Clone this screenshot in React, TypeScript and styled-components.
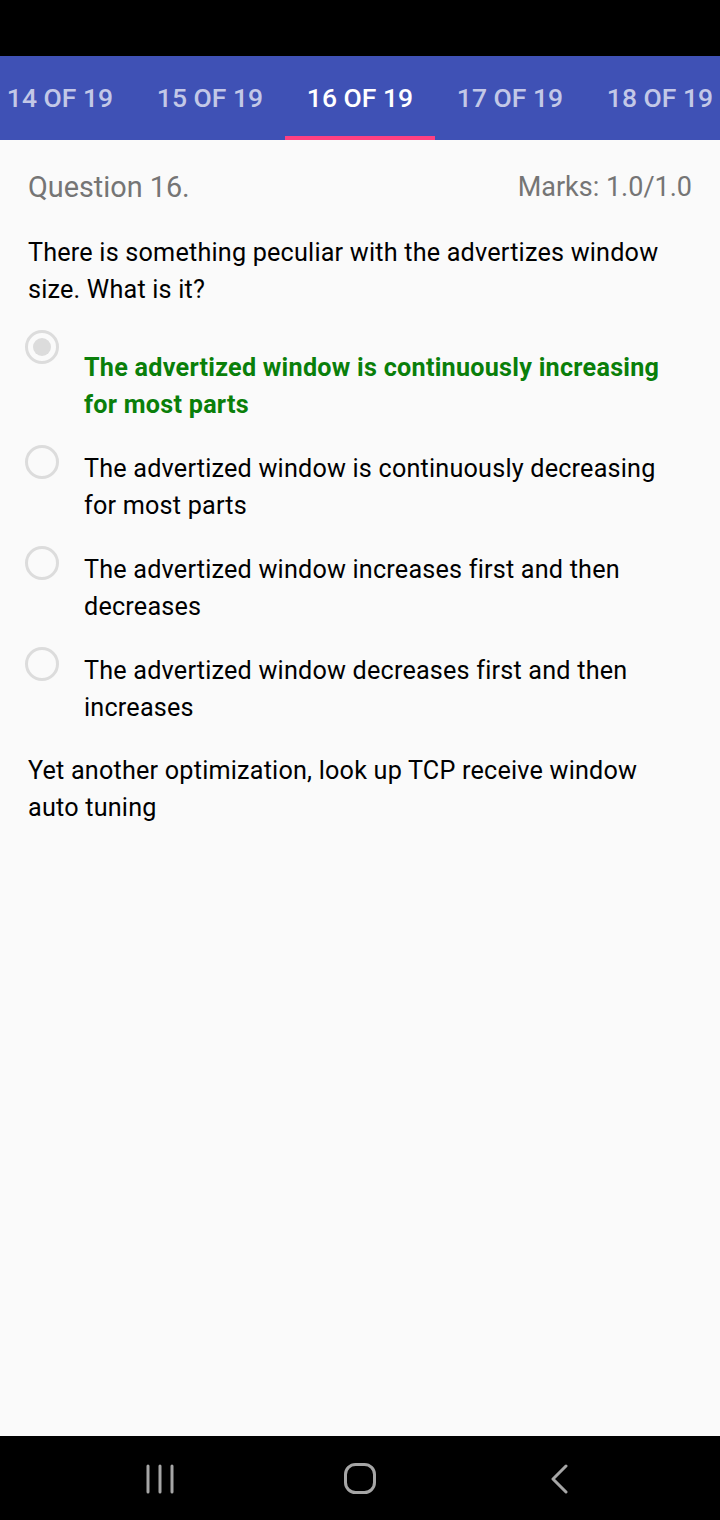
import React from "react";
import styled, { createGlobalStyle } from "styled-components";

const Global = createGlobalStyle`
  html, body { margin: 0; padding: 0; background: #000; }
  body { font-family: Roboto, "Noto Sans", Arial, sans-serif; }
  * { box-sizing: border-box; }
`;

const Screen = styled.div`
  width: 720px;
  height: 1520px;
  display: flex;
  flex-direction: column;
  background: #fafafa;
  overflow: hidden;
`;

const StatusBar = styled.div`
  height: 56px;
  background: #000;
  flex-shrink: 0;
`;

const TabBar = styled.div`
  height: 84px;
  background: #3f51b5;
  display: flex;
  overflow: hidden;
  flex-shrink: 0;
`;

const TabStrip = styled.div`
  display: flex;
  margin-left: -15px;
`;

const Tab = styled.div<{ $active?: boolean }>`
  width: 150px;
  height: 84px;
  flex-shrink: 0;
  display: flex;
  align-items: center;
  justify-content: center;
  padding-bottom: 2px;
  font-size: 26.5px;
  font-weight: 500;
  color: ${(p) => (p.$active ? "#ffffff" : "rgba(255,255,255,0.7)")};
  box-shadow: ${(p) => (p.$active ? "inset 0 -4px 0 #ff4081" : "none")};
  white-space: nowrap;
`;

const Content = styled.div`
  flex: 1;
  padding: 29px 28px 0 28px;
  display: flex;
  flex-direction: column;
`;

const HeaderRow = styled.div`
  display: flex;
  justify-content: space-between;
  align-items: center;
  line-height: 37px;
  color: #757575;
`;

const Title = styled.span`
  font-size: 28.8px;
`;

const Marks = styled.span`
  font-size: 27px;
`;

const Body = styled.div<{ $gapTop?: number }>`
  font-size: 25.2px;
  letter-spacing: 0.2px;
  line-height: 37px;
  color: #000;
  margin-top: ${(p) => p.$gapTop ?? 0}px;
`;

const Options = styled.div`
  display: flex;
  flex-direction: column;
  gap: 22px;
  margin-top: 22px;
`;

const OptionRow = styled.div`
  display: flex;
  align-items: flex-start;
`;

const Radio = styled.div<{ $checked?: boolean }>`
  width: 34px;
  height: 34px;
  border-radius: 50%;
  border: 3px solid #dcdcdc;
  margin-left: -3px;
  margin-right: 25px;
  flex-shrink: 0;
  display: flex;
  align-items: center;
  justify-content: center;
  &::after {
    content: "";
    display: ${(p) => (p.$checked ? "block" : "none")};
    width: 18px;
    height: 18px;
    border-radius: 50%;
    background: #dcdcdc;
  }
`;

const OptionText = styled.div<{ $correct?: boolean }>`
  font-size: 25.2px;
  line-height: 37px;
  margin-top: ${(p) => (p.$correct ? 19 : 5)}px;
  color: ${(p) => (p.$correct ? "#0a7f0a" : "#000")};
  font-weight: ${(p) => (p.$correct ? 700 : 400)};
  letter-spacing: ${(p) => (p.$correct ? "0.25px" : "0.2px")};
`;

const NavBar = styled.div`
  height: 84px;
  background: #000;
  flex-shrink: 0;
  display: flex;
  align-items: center;
  padding: 0 120px;
  justify-content: space-between;
`;

const NavButton = styled.div`
  width: 80px;
  display: flex;
  justify-content: center;
  align-items: center;
  height: 84px;
  padding-top: 2px;
`;

const tabs = ["14 OF 19", "15 OF 19", "16 OF 19", "17 OF 19", "18 OF 19"];

const options = [
  {
    text: "The advertized window is continuously increasing for most parts",
    correct: true,
  },
  {
    text: "The advertized window is continuously decreasing for most parts",
  },
  { text: "The advertized window increases first and then decreases" },
  { text: "The advertized window decreases first and then increases" },
];

export default function App() {
  return (
    <Screen>
      <Global />
      <StatusBar />
      <TabBar>
        <TabStrip>
          {tabs.map((t) => (
            <Tab key={t} $active={t === "16 OF 19"}>
              {t}
            </Tab>
          ))}
        </TabStrip>
      </TabBar>
      <Content>
        <HeaderRow>
          <Title>Question 16.</Title>
          <Marks>Marks: 1.0/1.0</Marks>
        </HeaderRow>
        <Body $gapTop={28}>
          There is something peculiar with the advertizes window size. What is
          it?
        </Body>
        <Options>
          {options.map((o, i) => (
            <OptionRow key={i}>
              <Radio $checked={!!o.correct} />
              <OptionText $correct={!!o.correct}>{o.text}</OptionText>
            </OptionRow>
          ))}
        </Options>
        <Body $gapTop={26}>
          Yet another optimization, look up TCP receive window auto tuning
        </Body>
      </Content>
      <NavBar>
        <NavButton>
          <svg width="28" height="30" viewBox="0 0 28 30">
            <g stroke="#a6a6a6" strokeWidth="3" strokeLinecap="round">
              <line x1="2" y1="2" x2="2" y2="28" />
              <line x1="14" y1="2" x2="14" y2="28" />
              <line x1="26" y1="2" x2="26" y2="28" />
            </g>
          </svg>
        </NavButton>
        <NavButton>
          <svg width="32" height="32" viewBox="0 0 32 32">
            <rect
              x="1.5"
              y="1.5"
              width="29"
              height="28"
              rx="10"
              fill="none"
              stroke="#a6a6a6"
              strokeWidth="3"
            />
          </svg>
        </NavButton>
        <NavButton>
          <svg width="20" height="30" viewBox="0 0 20 30">
            <polyline
              points="16,2 3,15 16,28"
              fill="none"
              stroke="#a6a6a6"
              strokeWidth="3"
              strokeLinecap="round"
              strokeLinejoin="round"
            />
          </svg>
        </NavButton>
      </NavBar>
    </Screen>
  );
}
